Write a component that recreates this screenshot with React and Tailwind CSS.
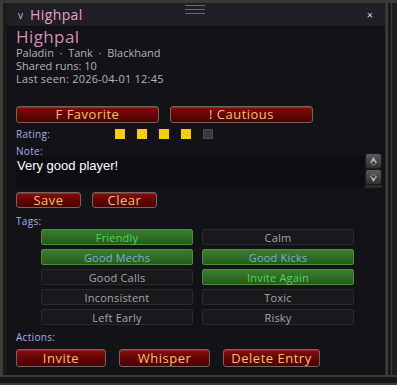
import React from "react";

const redBtn =
  "flex items-center justify-center rounded-[3px] border border-[#6e6660] bg-gradient-to-b from-[#8a0c0c] via-[#650505] to-[#4a0202] text-[#f2c46c] text-[13px] leading-none tracking-[0.5px] shadow-[inset_0_1px_0_rgba(255,120,120,0.25)]";

function RedButton({ children, className }) {
  return <div className={redBtn + " " + className}>{children}</div>;
}

function Tag({ label, on, blue }) {
  const base =
    "h-[16px] flex items-center justify-center rounded-[2px] text-[11px] leading-none tracking-[0.2px]";
  if (on) {
    return (
      <div
        className={
          base +
          " border border-[#4c8e3e] bg-gradient-to-b from-[#3a7e2e] to-[#275a1f] " +
          (blue ? "text-[#7fb0d2]" : "text-[#4fd852]")
        }
      >
        {label}
      </div>
    );
  }
  return (
    <div className={base + " border border-[#2a2a2c] bg-[#19191b] text-[#a6a6a6]"}>
      {label}
    </div>
  );
}

export default function App() {
  const font = { fontFamily: '"Open Sans", "DejaVu Sans", sans-serif' };
  return (
    <div className="w-[397px] h-[385px] bg-[#2b2b28] flex flex-col overflow-hidden" style={font}>
      <div className="h-[3px] shrink-0 bg-[#3a3a34]" />
      <div className="flex-1 flex min-h-0">
        {/* left frame */}
        <div className="w-[3px] bg-[#3e3e38]" />
        <div className="w-[4px] bg-[#1a1a1a]" />

        {/* main */}
        <div className="flex-1 flex flex-col bg-[#121217] min-w-0">
          {/* title bar */}
          <div className="h-[24px] shrink-0 bg-[#1f1f25] border-b border-[#0c0c10] flex items-center pl-[11px] pr-[12px] relative">
            <span className="text-[#c8c8c8] text-[10px] mr-[7px] mt-[1px]">v</span>
            <span className="text-[#e6a2c4] text-[14px] leading-none tracking-[0.4px]">Highpal</span>
            <div className="flex-1" />
            <span className="text-[#dcdcdc] text-[11px] leading-none">×</span>
            <div className="absolute left-[178px] top-[2px] flex flex-col gap-[3px]">
              <div className="w-[20px] h-[1px] bg-[#6a6a6e]" />
              <div className="w-[20px] h-[1px] bg-[#6a6a6e]" />
              <div className="w-[20px] h-[1px] bg-[#6a6a6e]" />
            </div>
          </div>

          <div className="flex flex-col pl-[9px] pr-[3px]">
            <div className="text-[#d98fb5] text-[17px] leading-[19px] tracking-[0.4px]">Highpal</div>
            <div className="text-[#b4b4b4] text-[11px] leading-[13px]">
              Paladin&nbsp; · &nbsp;Tank&nbsp; · &nbsp;Blackhand
            </div>
            <div className="text-[#b4b4b4] text-[11px] leading-[13px]">Shared runs: 10</div>
            <div className="text-[#b4b4b4] text-[11px] leading-[13px] tracking-[0.2px]">Last seen: 2026-04-01 12:45</div>

            <div className="flex gap-[11px] mt-[21px]">
              <RedButton className="w-[143px] h-[17px]">F Favorite</RedButton>
              <RedButton className="w-[143px] h-[17px]">! Cautious</RedButton>
            </div>

            <div className="flex items-center mt-[5px] h-[12px]">
              <span className="text-[#a9aee6] text-[10px] leading-none w-[99px] tracking-[0.3px]">Rating:</span>
              <div className="flex gap-[12px]">
                <div className="w-[10px] h-[10px] bg-[#f7ce0e]" />
                <div className="w-[10px] h-[10px] bg-[#f7ce0e]" />
                <div className="w-[10px] h-[10px] bg-[#f7ce0e]" />
                <div className="w-[10px] h-[10px] bg-[#f7ce0e]" />
                <div className="w-[10px] h-[10px] bg-[#3b3b3d] border border-[#4a4a4c]" />
              </div>
            </div>

            <div className="text-[#a9aee6] text-[10px] leading-none mt-[6px] tracking-[0.3px]">Note:</div>
            <div className="flex">
              <div className="flex-1 h-[32px] bg-[#0d0d12] pl-[1px] pt-[3px]">
                <div
                  className="text-white text-[13px] leading-none"
                  style={{ fontFamily: '"Liberation Sans", Arial, sans-serif' }}
                >
                  Very good player!
                </div>
              </div>
              <div className="w-[17px] flex flex-col -mt-[3px]">
                <div className="w-[17px] h-[16px] rounded-[3px] bg-gradient-to-b from-[#5c5c5e] to-[#303032] border border-[#1a1a1a] flex items-center justify-center">
                  <svg width="11" height="11" viewBox="0 0 11 11">
                    <path d="M5.5 1 L9 7 L2 7 Z" fill="#bdbdbd" />
                    <circle cx="5.5" cy="7" r="2" fill="#3a3a3a" stroke="#9a9a9a" strokeWidth="0.8" />
                  </svg>
                </div>
                <div className="w-[17px] h-[16px] rounded-[3px] bg-gradient-to-b from-[#5c5c5e] to-[#303032] border border-[#1a1a1a] flex items-center justify-center">
                  <svg width="11" height="11" viewBox="0 0 11 11">
                    <path d="M5.5 10 L9 4 L2 4 Z" fill="#bdbdbd" />
                    <circle cx="5.5" cy="4.5" r="2" fill="#3a3a3a" stroke="#9a9a9a" strokeWidth="0.8" />
                  </svg>
                </div>
                <div className="w-[17px] h-[3px] bg-[#2c2c2e]" />
              </div>
            </div>

            <div className="flex gap-[11px] mt-[4px]">
              <RedButton className="w-[65px] h-[16px]">Save</RedButton>
              <RedButton className="w-[65px] h-[16px]">Clear</RedButton>
            </div>

            <div className="text-[#a9aee6] text-[10px] leading-none mt-[8px] tracking-[0.3px]">Tags:</div>
            <div className="grid grid-cols-2 gap-x-[9px] gap-y-[4px] w-[313px] ml-[25px] mt-[3px]">
              <Tag label="Friendly" on />
              <Tag label="Calm" />
              <Tag label="Good Mechs" on blue />
              <Tag label="Good Kicks" on blue />
              <Tag label="Good Calls" />
              <Tag label="Invite Again" on />
              <Tag label="Inconsistent" />
              <Tag label="Toxic" />
              <Tag label="Left Early" />
              <Tag label="Risky" />
            </div>

            <div className="text-[#a9aee6] text-[10px] leading-none mt-[7px] tracking-[0.3px]">Actions:</div>
            <div className="flex gap-[13px] mt-[7px]">
              <RedButton className="w-[90px] h-[18px]">Invite</RedButton>
              <RedButton className="w-[91px] h-[18px]">Whisper</RedButton>
              <RedButton className="w-[97px] h-[18px]">Delete Entry</RedButton>
            </div>
          </div>
        </div>

        {/* right frame */}
        <div className="w-[12px] flex bg-[#151515]">
          <div className="w-[1px] bg-[#2e2e2e]" />
          <div className="w-[2px] bg-[#3c3c3c]" />
          <div className="w-[3px] bg-[#1a1a1a]" />
          <div className="w-[1px] bg-[#3a3a3a]" />
          <div className="flex-1 bg-[#1c1c1a]" />
        </div>
      </div>
      {/* bottom frame */}
      <div className="h-[10px] shrink-0 flex flex-col">
        <div className="h-[2px] bg-[#3a3a3a]" />
        <div className="h-[6px] bg-[#161616]" />
        <div className="h-[2px] bg-[#3a3a36]" />
      </div>
    </div>
  );
}
